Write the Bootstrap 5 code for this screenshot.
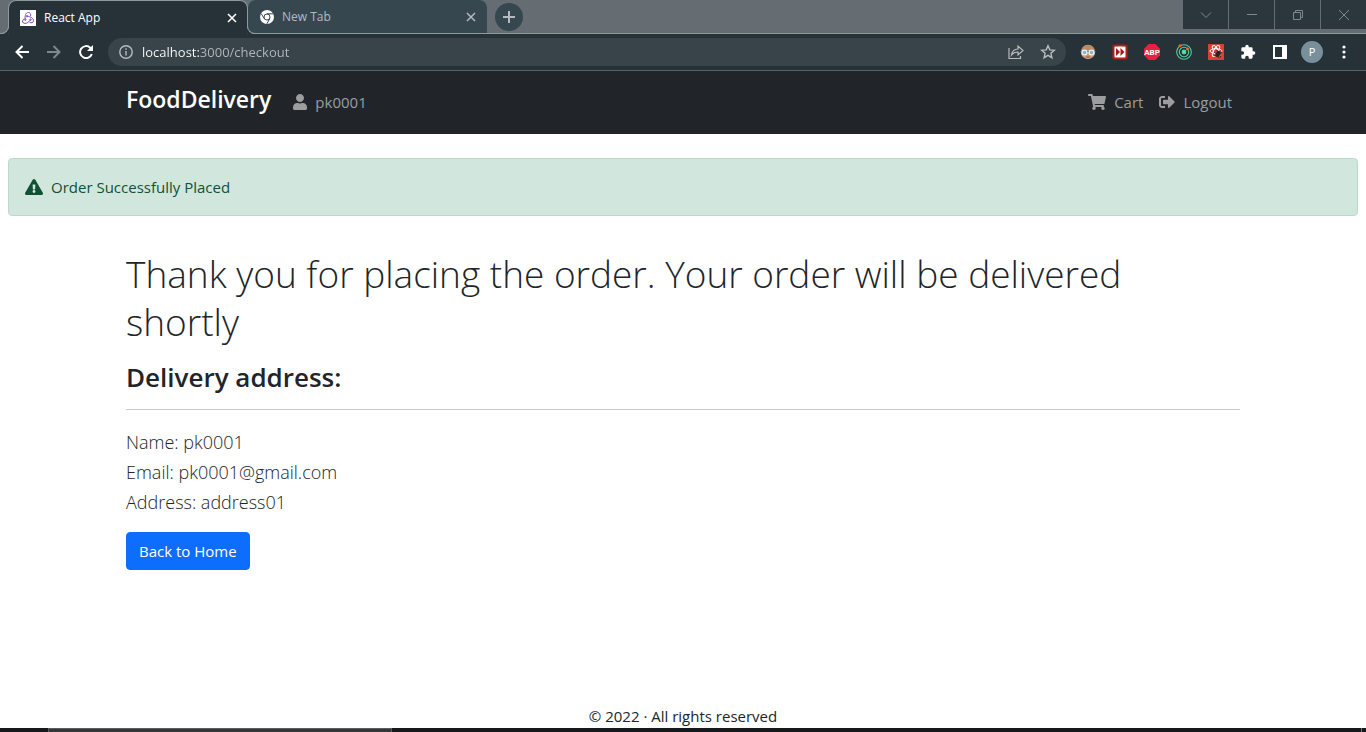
<!DOCTYPE html>
<html lang="en">
<head>
<meta charset="utf-8">
<meta name="viewport" content="width=device-width, initial-scale=1">
<title>React App</title>
<link href="https://cdn.jsdelivr.net/npm/bootstrap@5.3.0/dist/css/bootstrap.min.css" rel="stylesheet">
<style>
  :root { --frame: #263238; --edge: #8b9a9a; --tab: #37474f; }
  body { font-family: "Open Sans", "Noto Sans", sans-serif; font-size: 15px; line-height: 24px; color: #212529; }
  svg { display: block; flex: none; }

  /* Browser window */
  .tab-strip { background: #656d73; height: 34px; padding-left: 8px; box-shadow: inset 0 -1px var(--edge); }
  .browser-tab { width: 239px; height: 33px; padding: 0 10px 0 12px; font-size: 12px; border-radius: 8px 8px 0 0; background: var(--tab); color: #b4bbbf; }
  .browser-tab.current { position: relative; z-index: 1; width: 240px; height: 34px; background: var(--frame); color: #fff; border: 1px solid var(--edge); border-bottom: 0; padding: 0 9px 0 11px; }
  .browser-tab.current::before, .browser-tab.current::after { content: ""; position: absolute; bottom: 0; width: 8px; height: 8px; border-bottom: 1px solid var(--edge); }
  .browser-tab.current::before { right: 100%; border-right: 1px solid var(--edge); border-bottom-right-radius: 8px; box-shadow: 2px 2px 0 var(--frame); }
  .browser-tab.current::after { left: 100%; border-left: 1px solid var(--edge); border-bottom-left-radius: 8px; box-shadow: -2px 2px 0 var(--frame); }
  .plain-btn { display: flex; align-items: center; justify-content: center; padding: 0; border: 0; background: none; color: inherit; }
  .close-btn { width: 12px; height: 12px; }
  .add-btn { width: 28px; height: 28px; border-radius: 50%; background: var(--tab); color: #b4bbbf; margin: 3px 8px; }
  .window-controls { height: 29px; gap: 1px; }
  .window-controls .plain-btn { width: 45px; background: #2c373d; color: #7f878c; }
  .tool-row { background: var(--frame); height: 37px; padding: 0 6px; border-bottom: 1px solid #56636a; color: #fff; }
  .tool-row .plain-btn { width: 32px; height: 32px; }
  .address-bar { height: 28px; border-radius: 14px; background: #384449; margin: 0 6px; padding-left: 10px; padding-right: 2px; color: #b8bdbf; }
  .address-bar input { border: 0; padding: 0; outline: 0; font-size: 13px; background: linear-gradient(90deg, #fff 58px, #b4b9bc 58px); -webkit-background-clip: text; background-clip: text; color: transparent; }
  .profile-dot { width: 22px; height: 22px; border-radius: 50%; background: #78909c; font-size: 11px; line-height: 22px; }

  /* Food delivery page */
  .page-box { --bs-gutter-x: 26px; }
  .top-nav { height: 63px; --bs-navbar-padding-y: 0; }
  .top-nav .navbar-brand { font-size: 23px; font-weight: 600; line-height: 32px; padding: 0 0 8px; margin-right: 14px; }
  .top-nav .nav-link { padding: 7px 8px 9px; color: #9b9d9e; }
  .order-alert { margin: 24px 8px 0; padding: 16px; border-radius: 4px; background: #d1e7dd; border-color: #badbcc; color: #0f5132; }
  .thanks { font-size: 37px; font-weight: 300; line-height: 48px; margin: 34px 0 14px; }
  .address-title { font-size: 26px; font-weight: 600; line-height: 34px; margin: 0 0 15px; }
  .address-rule { margin: 0 0 17px; opacity: .25; }
  .address-lines { font-size: 18px; font-weight: 300; line-height: 30px; margin-bottom: 15px; }
  .home-btn { --bs-btn-font-size: 15px; --bs-btn-bg: #0d6efd; --bs-btn-border-radius: 4px; line-height: 24px; }
  .os-bar { height: 4px; background: #15191b; }
  .os-bar .running { width: 344px; margin-left: 48px; background: #333637; border: 1px solid #5a5d5e; border-bottom: 0; }
  .os-bar .show-desktop { width: 5px; border-left: 1px solid #777; }
</style>
</head>
<body class="d-flex flex-column min-vh-100 bg-white">

<header>
  <div class="tab-strip d-flex align-items-start">
    <div class="browser-tab current d-flex align-items-center">
      <svg width="16" height="16" viewBox="0 0 16 16"><rect width="16" height="16" fill="#fff"/><g fill="none" stroke="#764abc" stroke-width="1"><path d="M5.2 9.5C4.600 5.500 6 2.500 8.200 2.500c2 0 3 1.900 2.300 3.600M7 6.200c3.800.3 7 2.600 6.500 4.900-.4 1.700-2.300 2.200-3.800 1.100M10.500 9.700c-1.900 3.100-5.300 4.500-7.200 3.200-1.500-1.100-.9-3.200 1-3.900"/><circle cx="5.300" cy="9.700" r=".7"/><circle cx="7" cy="6.200" r=".7"/><circle cx="10.500" cy="9.700" r=".7"/></g></svg>
      <span class="ms-2">React App</span>
      <button class="plain-btn close-btn ms-auto" aria-label="Close React App"><svg width="10" height="10" viewBox="0 0 10 10" stroke="currentColor" stroke-width="1.600"><path d="M1 1l8 8M9 1L1 9"/></svg></button>
    </div>
    <div class="browser-tab d-flex align-items-center">
      <svg width="14" height="14" viewBox="0 0 14 14"><circle cx="7" cy="7" r="7" fill="#fff"/><circle cx="7" cy="7" r="3" fill="#fff" stroke="#37474f" stroke-width="1"/><path d="M7 3.800h6.200M4.200 8.600L1.200 3.500M9.800 8.600L6.800 13.900" stroke="#37474f" fill="none"/></svg>
      <span class="ms-2">New Tab</span>
      <button class="plain-btn close-btn ms-auto" aria-label="Close New Tab"><svg width="10" height="10" viewBox="0 0 10 10" stroke="currentColor" stroke-width="1.500"><path d="M1 1l8 8M9 1L1 9"/></svg></button>
    </div>
    <button class="plain-btn add-btn" aria-label="Add tab"><svg width="12" height="12" viewBox="0 0 12 12" stroke="currentColor" stroke-width="2"><path d="M6 0v12M0 6h12"/></svg></button>
    <div class="window-controls d-flex ms-auto">
      <button class="plain-btn" aria-label="Search tabs"><svg width="12" height="12" viewBox="0 0 12 12" fill="none" stroke="currentColor"><path d="M1 3.500l5 5 5-5"/></svg></button>
      <button class="plain-btn" aria-label="Minimize"><svg width="10" height="10" viewBox="0 0 10 10" stroke="currentColor"><path d="M0 4.500h10"/></svg></button>
      <button class="plain-btn" aria-label="Restore"><svg width="10" height="10" viewBox="0 0 10 10" fill="none" stroke="currentColor"><path d="M.5 2.500h7v7h-7zM2.500 2.500v-2h7v7h-2"/></svg></button>
      <button class="plain-btn" aria-label="Close window"><svg width="12" height="12" viewBox="0 0 12 12" stroke="currentColor"><path d="M1 1l10 10M11 1L1 11"/></svg></button>
    </div>
  </div>

  <div class="tool-row d-flex align-items-center">
    <button class="plain-btn" aria-label="Back"><svg width="14" height="14" viewBox="0 0 14 14" fill="none" stroke="#fff" stroke-width="2"><path d="M14 7H1.500M7.500 1l-6 6 6 6"/></svg></button>
    <button class="plain-btn" aria-label="Forward"><svg width="14" height="14" viewBox="0 0 14 14" fill="none" stroke="#7e878b" stroke-width="2"><path d="M0 7h12.500M6.500 1l6 6-6 6"/></svg></button>
    <button class="plain-btn" aria-label="Reload"><svg width="14" height="14" viewBox="0 0 14 14"><path d="M12.800 9A6 6 0 1 1 11.200 2.700L12 3.500" fill="none" stroke="#fff" stroke-width="2"/><path d="M14 0v6H8z" fill="#fff"/></svg></button>
    <div class="address-bar d-flex align-items-center flex-grow-1">
      <svg width="16" height="16" viewBox="0 0 16 16" fill="none" stroke="currentColor" stroke-width="1.400"><circle cx="8" cy="8" r="6.200"/><path d="M8 7v4.500M8 4.200v1.600"/></svg>
      <input class="flex-grow-1 ms-2" type="text" aria-label="Address" value="localhost:3000/checkout">
      <button class="plain-btn" aria-label="Share"><svg width="16" height="16" viewBox="0 0 16 16" fill="none" stroke="currentColor" stroke-width="1.200"><path d="M1 4v10.500h11.500V12M3.500 11c.5-3.800 2.800-5.800 6.500-6V2l5 4.500-5 4.500V8C7 8 5 9 3.500 11z"/></svg></button>
      <button class="plain-btn" aria-label="Bookmark"><svg width="16" height="16" viewBox="0 0 16 16" fill="none" stroke="currentColor" stroke-width="1.400"><path d="M8 1.800l1.800 4.100 4.500.4-3.400 3 1 4.400L8 11.400l-3.900 2.300 1-4.400-3.400-3 4.500-.4z"/></svg></button>
    </div>
    <button class="plain-btn" aria-label="Goggles extension"><svg width="16" height="16" viewBox="0 0 16 16"><circle cx="8" cy="8" r="7.200" fill="#c99a74"/><path d="M1.500 6C2 3 5 1 8 1s6 2 6.500 5z" fill="#b58d6b"/><path d="M0 7.500h16" stroke="#4f5b60"/><circle cx="4.500" cy="8.500" r="2.400" fill="#7fb4cc" stroke="#eef3f5" stroke-width="1.300"/><circle cx="11.500" cy="8.500" r="2.400" fill="#7fb4cc" stroke="#eef3f5" stroke-width="1.300"/><path d="M6.500 13h3" stroke="#8a4b35"/></svg></button>
    <button class="plain-btn" aria-label="Fast forward extension"><svg width="16" height="16" viewBox="0 0 16 16"><rect x=".5" y=".5" width="15" height="15" rx="2" fill="#b3201c"/><rect x="2.500" y="2.500" width="11" height="11" rx="1" fill="#fff"/><path d="M4 4l4 4-4 4zM8.500 4l4 4-4 4z" fill="#a31a17"/></svg></button>
    <button class="plain-btn" aria-label="Ad blocker"><svg width="16" height="16" viewBox="0 0 16 16"><path d="M4.700 0h6.600L16 4.700v6.600L11.300 16H4.700L0 11.300V4.700z" fill="#ed1e45"/><text x="8" y="11" text-anchor="middle" font-size="8" font-family="Roboto, sans-serif" font-weight="700" fill="#fff">ABP</text></svg></button>
    <button class="plain-btn" aria-label="Radar extension"><svg width="16" height="16" viewBox="0 0 16 16" fill="none" stroke="#4fd1a1" stroke-width="1.100"><circle cx="8" cy="8" r="7.300"/><circle cx="8" cy="8" r="4.700"/><circle cx="8" cy="8" r="1.900" fill="#5fe3b3"/><circle cx="4" cy="1.700" r="1.500" fill="#f26322" stroke="none"/><circle cx="11.500" cy="5" r="1.500" fill="#f26322" stroke="none"/></svg></button>
    <button class="plain-btn" aria-label="React developer tools"><svg width="16" height="16" viewBox="0 0 16 16"><rect width="16" height="16" fill="#d9402f"/><g fill="none" stroke="#fff" stroke-width="1"><ellipse cx="8" cy="7" rx="6" ry="2.300"/><ellipse cx="8" cy="7" rx="6" ry="2.300" transform="rotate(60 8 7)"/><ellipse cx="8" cy="7" rx="6" ry="2.300" transform="rotate(120 8 7)"/></g><ellipse cx="10" cy="10" rx="2.300" ry="3.300" fill="#30211f" transform="rotate(35 10 10)"/><path d="M6 8l7 5M6 12l8-4M9 6l2 8" stroke="#30211f"/></svg></button>
    <button class="plain-btn" aria-label="Extensions"><svg width="16" height="16" viewBox="0 0 24 24" fill="#fff"><path d="M20.500 11H19V7a2 2 0 0 0-2-2h-4V3.500a2.500 2.500 0 0 0-5 0V5H4a2 2 0 0 0-2 2v3.800h1.500a2.700 2.700 0 0 1 0 5.400H2V20a2 2 0 0 0 2 2h3.800v-1.500a2.700 2.700 0 0 1 5.400 0V22H17a2 2 0 0 0 2-2v-4h1.500a2.500 2.500 0 0 0 0-5z"/></svg></button>
    <button class="plain-btn" aria-label="Side panel"><svg width="14" height="14" viewBox="0 0 14 14"><path fill="#fff" fill-rule="evenodd" d="M0 0h14v14H0zM2 2v10h7V2z"/></svg></button>
    <button class="plain-btn" aria-label="Profile"><span class="profile-dot">P</span></button>
    <button class="plain-btn" aria-label="Menu"><svg width="4" height="14" viewBox="0 0 4 14" fill="#fff"><circle cx="2" cy="2" r="1.600"/><circle cx="2" cy="7" r="1.600"/><circle cx="2" cy="12" r="1.600"/></svg></button>
  </div>
</header>

<nav class="navbar navbar-expand top-nav bg-dark" data-bs-theme="dark">
  <div class="container page-box">
    <a class="navbar-brand text-white" href="#">FoodDelivery</a>
    <div class="navbar-nav flex-grow-1">
      <a class="nav-link d-flex align-items-center gap-2 me-auto" href="#"><svg width="14" height="16" viewBox="0 0 448 512" fill="currentColor"><path d="M224 256c70.700 0 128-57.300 128-128S294.700 0 224 0 96 57.300 96 128s57.300 128 128 128zm89.600 32h-16.700c-22.200 10.200-46.900 16-72.900 16s-50.600-5.800-72.900-16h-16.700C60.200 288 0 348.200 0 422.400V464c0 26.500 21.500 48 48 48h352c26.500 0 48-21.500 48-48v-41.600c0-74.200-60.200-134.400-134.400-134.400z"/></svg>pk0001</a>
      <a class="nav-link d-flex align-items-center gap-2" href="#"><svg width="18" height="16" viewBox="0 0 576 512" fill="currentColor"><path d="M528.120 301.319l47.273-208C578.806 78.301 567.391 64 551.990 64H159.208l-9.166-44.810C147.758 8.021 137.930 0 126.529 0H24C10.745 0 0 10.745 0 24v16c0 13.255 10.745 24 24 24h69.883l70.248 343.435C147.325 417.100 136 435.222 136 456c0 30.928 25.072 56 56 56s56-25.072 56-56c0-15.674-6.447-29.835-16.824-40h209.647C430.447 426.165 424 440.326 424 456c0 30.928 25.072 56 56 56s56-25.072 56-56c0-22.172-12.888-41.332-31.579-50.405l5.517-24.276c3.413-15.018-8.002-29.319-23.403-29.319H218.117l-6.545-32h293.145c11.206 0 20.920-7.754 23.403-18.681z"/></svg>Cart</a>
      <a class="nav-link d-flex align-items-center gap-2" href="#"><svg width="16" height="16" viewBox="0 0 512 512" fill="currentColor"><path d="M497 273L329 441c-15 15-41 4.500-41-17v-96H152c-13.300 0-24-10.700-24-24v-96c0-13.300 10.700-24 24-24h136V88c0-21.400 25.900-32 41-17l168 168c9.300 9.400 9.300 24.600 0 34zM192 436v-40c0-6.600-5.400-12-12-12H96c-17.700 0-32-14.300-32-32V160c0-17.700 14.300-32 32-32h84c6.600 0 12-5.400 12-12V76c0-6.600-5.400-12-12-12H96c-53 0-96 43-96 96v192c0 53 43 96 96 96h84c6.600 0 12-5.400 12-12z"/></svg>Logout</a>
    </div>
  </div>
</nav>

<div class="alert order-alert d-flex align-items-center gap-2" role="alert">
  <svg width="18" height="16" viewBox="0 0 576 512" fill="currentColor"><path d="M569.517 440.013C587.975 472.007 564.806 512 527.940 512H48.054c-36.937 0-59.999-40.055-41.577-71.987L246.423 23.985c18.467-32.009 64.720-31.951 83.154 0l239.940 416.028zM288 354c-25.405 0-46 20.595-46 46s20.595 46 46 46 46-20.595 46-46-20.595-46-46-46zm-43.673-165.346l7.418 136c.347 6.364 5.609 11.346 11.982 11.346h48.546c6.373 0 11.635-4.982 11.982-11.346l7.418-136c.375-6.874-5.098-12.654-11.982-12.654h-63.383c-6.884 0-12.356 5.780-11.981 12.654z"/></svg>
  <span>Order Successfully Placed</span>
</div>

<main class="container page-box">
  <h1 class="thanks">Thank you for placing the order. Your order will be delivered shortly</h1>
  <h2 class="address-title">Delivery address:</h2>
  <hr class="address-rule">
  <div class="address-lines">
    <div>Name: pk0001</div>
    <div>Email: pk0001@gmail.com</div>
    <div>Address: address01</div>
  </div>
  <button type="button" class="btn btn-primary home-btn">Back to Home</button>
</main>

<footer class="mt-auto text-center">© 2022 · All rights reserved</footer>
<div class="os-bar d-flex"><div class="running"></div><div class="show-desktop ms-auto"></div></div>

<script src="https://cdn.jsdelivr.net/npm/bootstrap@5.3.0/dist/js/bootstrap.bundle.min.js"></script>
</body>
</html>
